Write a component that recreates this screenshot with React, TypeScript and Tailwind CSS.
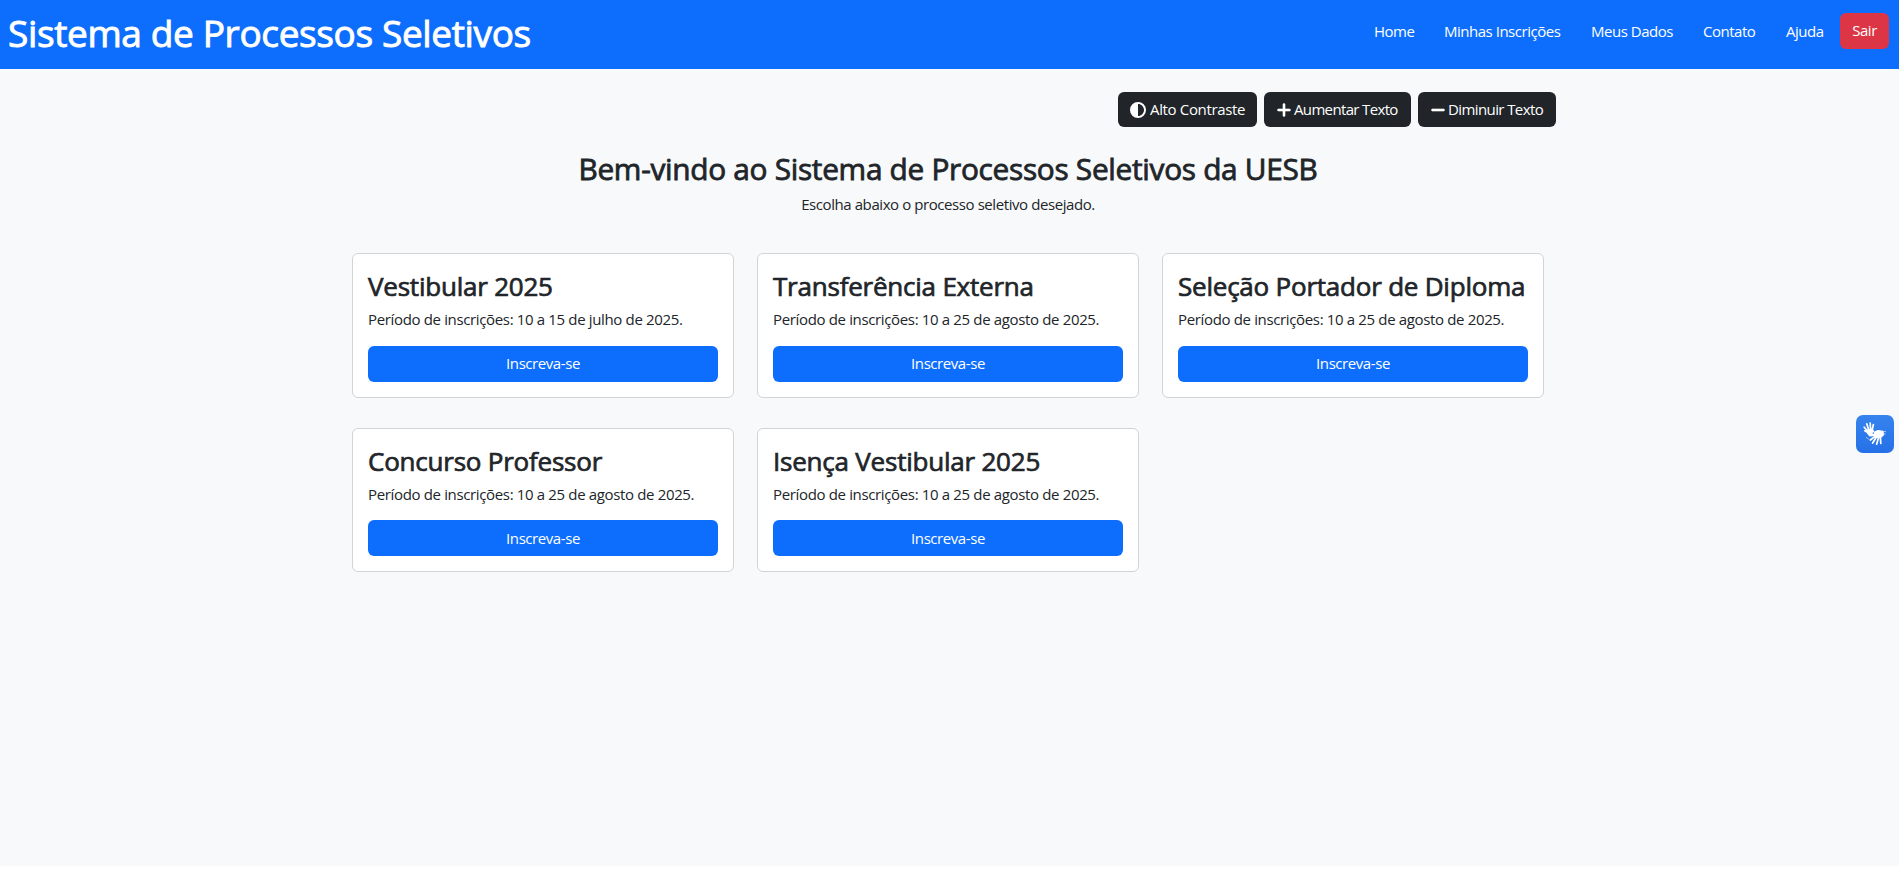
import { FaCircleHalfStroke, FaPlus, FaMinus } from "react-icons/fa6";

const cards = [
  { title: "Vestibular 2025", period: "Período de inscrições: 10 a 15 de julho de 2025." },
  { title: "Transferência Externa", period: "Período de inscrições: 10 a 25 de agosto de 2025." },
  { title: "Seleção Portador de Diploma", period: "Período de inscrições: 10 a 25 de agosto de 2025." },
  { title: "Concurso Professor", period: "Período de inscrições: 10 a 25 de agosto de 2025." },
  { title: "Isença Vestibular 2025", period: "Período de inscrições: 10 a 25 de agosto de 2025." },
];

const links = [
  { label: "Home", width: "w-[70px]" },
  { label: "Minhas Inscrições", width: "w-[147px]" },
  { label: "Meus Dados", width: "w-[112px]" },
  { label: "Contato", width: "w-[83px]" },
  { label: "Ajuda", width: "w-[54px]" },
];

function SignLanguageIcon() {
  return (
    <svg viewBox="0 0 38 38" className="size-[38px]" fill="none" stroke="#fff" strokeLinecap="round" strokeLinejoin="round">
      <path d="M11.5 15.5L16 14L17.5 16.2L15.5 18L18 20.5L14 21L11.8 18.5Z" fill="#fff" strokeWidth="1.2" />
      <path d="M12 16.5L8.2 12.2M12.8 15.5L10.8 8.8M14.6 15L14.2 8M16.2 15L17.4 9.5M12.5 18L8.8 15.8" strokeWidth="1.7" />
      <path d="M18.5 17.2L22 15.6L27 16.5L27.2 20L24.5 22.5L20 22L18.5 20Z" fill="#fff" strokeWidth="1.4" />
      <path d="M19.5 21L14.3 25M20.5 22L16.6 28M22.6 22.5L20.6 29.2M24.4 22.5L24.8 28.5M19.5 19.5L15.5 20.2" strokeWidth="1.7" />
      <path d="M10.5 22.5L12.5 24M28 16.6H29.6M28 19H29.2" strokeWidth="1" opacity="0.6" />
    </svg>
  );
}

export default function App() {
  return (
    <div className="h-[875px] bg-white pr-[2px] font-['Open_Sans','Noto_Sans',sans-serif] text-[15px] tracking-[-0.35px] text-[#212529]">
      <div className="relative h-[866px] bg-[#f8f9fa]">
        <header className="flex h-[69px] items-start justify-between bg-[#0d6efd] pr-[10px] pl-2 text-white">
          <h1 className="pt-[9px] text-[37px] leading-[48px] tracking-[-0.36px] whitespace-nowrap [-webkit-text-stroke:0.9px]">Sistema de Processos Seletivos</h1>
          <nav className="flex items-start pt-[13px]">
            {links.map((l) => (
              <a key={l.label} href="#" className={`${l.width} pt-[6px] leading-6 tracking-[-0.48px] whitespace-nowrap`}>{l.label}</a>
            ))}
            <button className="flex h-9 w-[49px] items-center justify-center rounded-[6px] bg-[#dc3545] pb-px tracking-[-0.48px]">Sair</button>
          </nav>
        </header>
        <div className="flex h-[58px] justify-end gap-[7px] pt-[23px] pr-[343px]">
          <button className="flex h-[35px] w-[139px] items-center gap-1 rounded-[6px] bg-[#212529] pl-3 text-white whitespace-nowrap">
            <FaCircleHalfStroke size={16} />Alto Contraste
          </button>
          <button className="flex h-[35px] w-[147px] items-center gap-[2px] rounded-[6px] bg-[#212529] pl-3 tracking-[-0.65px] text-white whitespace-nowrap">
            <FaPlus size={16} className="stroke-white stroke-[20]" />Aumentar Texto
          </button>
          <button className="flex h-[35px] w-[138px] items-center gap-[2px] rounded-[6px] bg-[#212529] pl-3 tracking-[-0.6px] text-white whitespace-nowrap">
            <FaMinus size={16} className="stroke-white stroke-[20]" />Diminuir Texto
          </button>
        </div>
        <main className="ml-[352px] w-[1192px]">
          <h2 className="pt-[23px] text-center text-[29.8px] leading-[38px] tracking-[-0.29px] [-webkit-text-stroke:0.8px]">Bem-vindo ao Sistema de Processos Seletivos da UESB</h2>
          <p className="pt-1 text-center leading-6 tracking-[-0.42px]">Escolha abaixo o processo seletivo desejado.</p>
          <div className="mt-[37.2px] grid grid-cols-3 gap-x-[23px] gap-y-[30.4px]">
            {cards.map((c) => (
              <section key={c.title} className="h-[144.4px] rounded-[6px] border border-[#d3d4d5] bg-white p-[15px]">
                <h3 className="pt-px text-[26px] leading-[33.6px] tracking-[-0.22px] whitespace-nowrap [-webkit-text-stroke:0.7px]">{c.title}</h3>
                <p className="mt-[3.5px] leading-6 whitespace-nowrap">{c.period}</p>
                <button className="mt-[14.3px] flex h-9 w-full items-center justify-center rounded-[6px] bg-[#0d6efd] tracking-[-0.43px] text-white">Inscreva-se</button>
              </section>
            ))}
          </div>
        </main>
        <button aria-label="Libras" className="absolute top-[415px] right-[5px] size-[38px] rounded-[7px] bg-linear-to-t from-[#2670e8] to-[#3683ee]">
          <SignLanguageIcon />
        </button>
      </div>
    </div>
  );
}
